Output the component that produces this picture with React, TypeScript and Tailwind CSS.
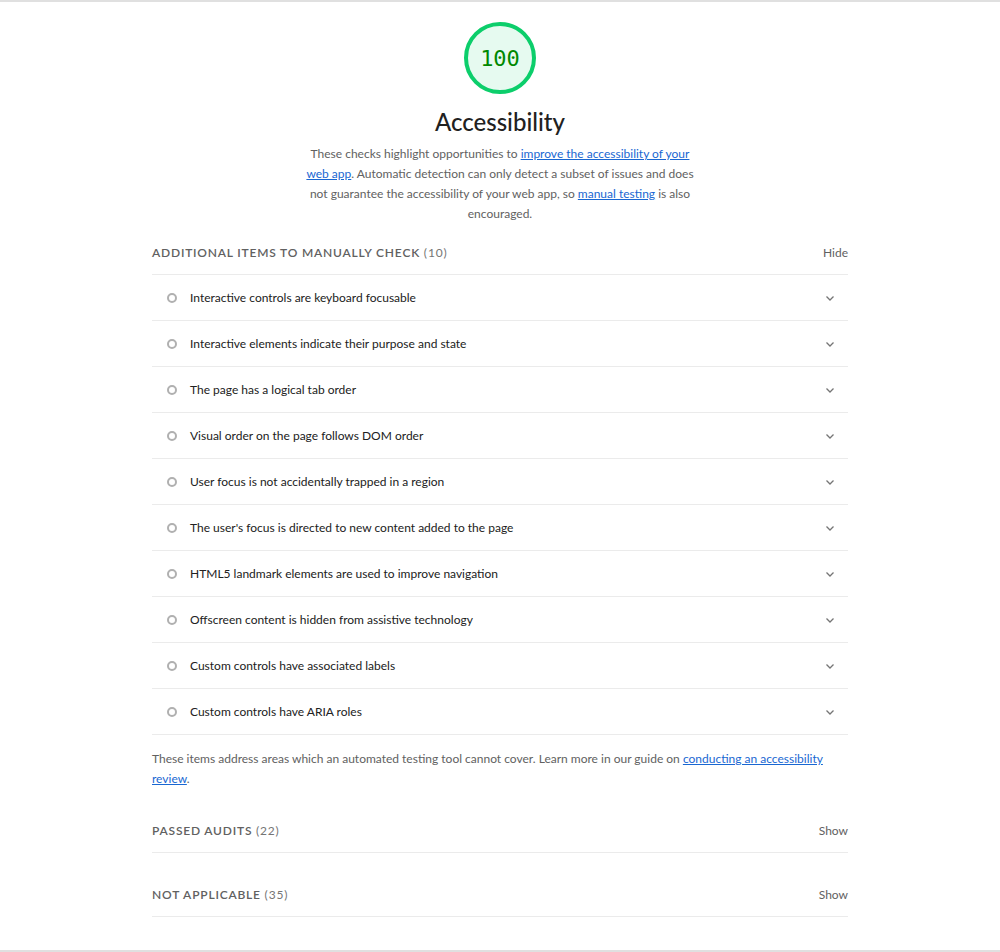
import React from "react";

const items = [
  "Interactive controls are keyboard focusable",
  "Interactive elements indicate their purpose and state",
  "The page has a logical tab order",
  "Visual order on the page follows DOM order",
  "User focus is not accidentally trapped in a region",
  "The user's focus is directed to new content added to the page",
  "HTML5 landmark elements are used to improve navigation",
  "Offscreen content is hidden from assistive technology",
  "Custom controls have associated labels",
  "Custom controls have ARIA roles",
];

function Chevron() {
  return (
    <svg width="12" height="12" viewBox="0 0 12 12" className="text-[#757575]">
      <path d="M2.5 4.5 L6 8 L9.5 4.5" fill="none" stroke="currentColor" strokeWidth="1.3" />
    </svg>
  );
}

function GroupHeader({ title, count, action }: { title: string; count: number; action: string }) {
  return (
    <div className="flex items-center justify-between h-[43px] border-b border-[#ebebeb]">
      <span className="text-[12px] font-semibold tracking-[0.8px] text-[#616161] uppercase">
        {title} <span className="font-normal text-[#757575]">({count})</span>
      </span>
      <span className="text-[12px] text-[#616161]">{action}</span>
    </div>
  );
}

export default function App() {
  return (
    <div
      className="w-[1000px] h-[952px] bg-white text-[#212121] border-t-2 border-b-2 border-[#e0e0e0]"
      style={{ fontFamily: "Lato, 'Noto Sans', sans-serif" }}
    >
      <div className="w-[696px] mx-auto">
        {/* score gauge */}
        <div className="flex flex-col items-center pt-[20px]">
          <div className="w-[72px] h-[72px] rounded-full border-[4px] border-[#0cce6b] bg-[#e6faf0] flex items-center justify-center">
            <span
              className="text-[22px] text-[#008800]"
              style={{ fontFamily: "'DejaVu Sans Mono', monospace" }}
            >
              100
            </span>
          </div>
          <h1 className="mt-[12px] text-[24px] leading-[32px] font-medium text-[#212121]">Accessibility</h1>
          <p className="mt-[6px] w-[400px] text-center text-[12px] leading-[20px] text-[#616161]">
            These checks highlight opportunities to{" "}
            <a className="text-[#1967d2] underline">improve the accessibility of your web app</a>. Automatic
            detection can only detect a subset of issues and does not guarantee the accessibility of your web app,
            so <a className="text-[#1967d2] underline">manual testing</a> is also encouraged.
          </p>
        </div>

        {/* manual check group */}
        <div className="mt-[8px]">
          <GroupHeader title="Additional items to manually check" count={10} action="Hide" />
          {items.map((t) => (
            <div key={t} className="flex items-center h-[46px] border-b border-[#ebebeb]">
              <div className="w-[38px] flex justify-center pl-[2px]">
                <span className="w-[10px] h-[10px] rounded-full border-[2px] border-[#b0b0b0]" />
              </div>
              <span className="flex-1 text-[12px] text-[#212121]">{t}</span>
              <div className="w-[36px] flex justify-center">
                <Chevron />
              </div>
            </div>
          ))}
          <p className="pt-[14px] text-[12px] leading-[20px] text-[#616161]">
            These items address areas which an automated testing tool cannot cover. Learn more in our guide on{" "}
            <a className="text-[#1967d2] underline">conducting an accessibility review</a>.
          </p>
        </div>

        <div className="mt-[21px]">
          <GroupHeader title="Passed audits" count={22} action="Show" />
        </div>
        <div className="mt-[21px]">
          <GroupHeader title="Not applicable" count={35} action="Show" />
        </div>
      </div>
    </div>
  );
}
